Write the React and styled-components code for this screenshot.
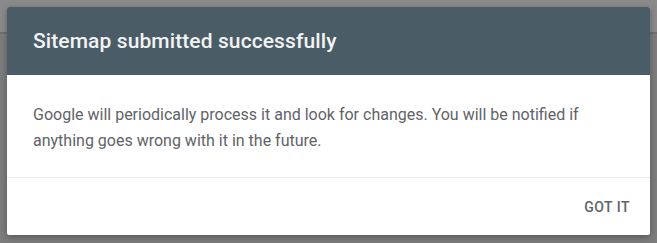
import React from 'react'
import styled, { createGlobalStyle } from 'styled-components'

const GlobalStyle = createGlobalStyle`
    html, body {
        margin: 0;
        padding: 0;
        width: 657px;
        height: 243px;
        overflow: hidden;
        background: #7b7b7b;
        font-family: Roboto, "Liberation Sans", Arial, sans-serif;
    }
`

const Backdrop = styled.div`
    width: 657px;
    height: 243px;
    box-sizing: border-box;
    padding: 7px 7px 8px 7px;
    background: linear-gradient(#8a8a8a 0, #8a8a8a 32px, #6e6e6e 32px, #6e6e6e 34px, #7c7c7c 34px);
`

const Dialog = styled.section`
    width: 643px;
    height: 228px;
    display: flex;
    flex-direction: column;
    background: #ffffff;
    border-radius: 2px;
    overflow: hidden;
    box-shadow: 0 2px 6px rgba(0, 0, 0, 0.3);
`

const Header = styled.header`
    height: 68px;
    display: flex;
    align-items: center;
    padding: 0 26px;
    background: #4a5c65;

    h1 {
        margin: 0;
        font-size: 21px;
        font-weight: 500;
        color: #f1f3f4;
        letter-spacing: 0.1px;
    }
`

const Body = styled.div`
    flex: 1;
    padding: 27px 26px 0 26px;
    border-bottom: 1px solid #e8eaed;

    p {
        margin: 0;
        font-size: 16px;
        line-height: 26px;
        color: #5f6368;
    }
`

const Footer = styled.footer`
    height: 57px;
    display: flex;
    align-items: center;
    justify-content: flex-end;
    padding: 0 12px;
`

const TextButton = styled.button`
    border: none;
    background: transparent;
    padding: 8px 8px;
    font-family: inherit;
    font-size: 14px;
    font-weight: 500;
    color: #5f6368;
    letter-spacing: 0.5px;
    cursor: pointer;
`

function App() {
    return (
        <>
            <GlobalStyle />
            <Backdrop>
                <Dialog>
                    <Header>
                        <h1>Sitemap submitted successfully</h1>
                    </Header>
                    <Body>
                        <p>
                            Google will periodically process it and look for changes. You will be notified if
                            anything goes wrong with it in the future.
                        </p>
                    </Body>
                    <Footer>
                        <TextButton>GOT IT</TextButton>
                    </Footer>
                </Dialog>
            </Backdrop>
        </>
    )
}

export default App
